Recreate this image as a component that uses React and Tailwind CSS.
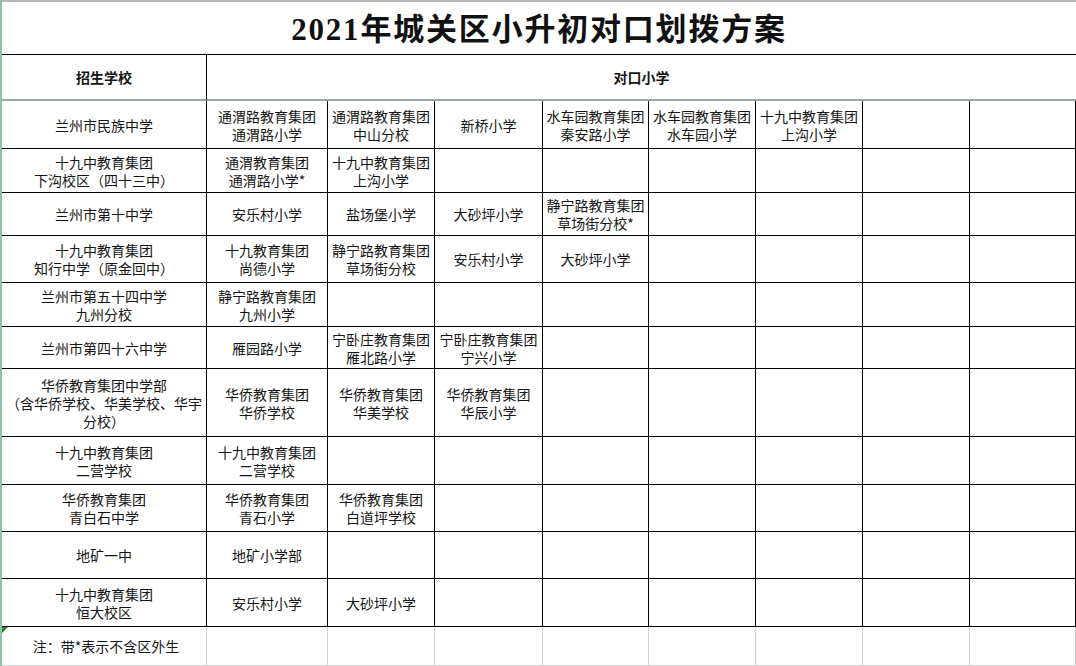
const rows = [
  ['兰州市民族中学', ['通渭路教育集团\n通渭路小学', '通渭路教育集团\n中山分校', '新桥小学', '水车园教育集团\n秦安路小学', '水车园教育集团\n水车园小学', '十九中教育集团\n上沟小学']],
  ['十九中教育集团\n下沟校区（四十三中）', ['通渭教育集团\n通渭路小学*', '十九中教育集团\n上沟小学']],
  ['兰州市第十中学', ['安乐村小学', '盐场堡小学', '大砂坪小学', '静宁路教育集团\n草场街分校*']],
  ['十九中教育集团\n知行中学（原金回中）', ['十九教育集团\n尚德小学', '静宁路教育集团\n草场街分校', '安乐村小学', '大砂坪小学']],
  ['兰州市第五十四中学\n九州分校', ['静宁路教育集团\n九州小学']],
  ['兰州市第四十六中学', ['雁园路小学', '宁卧庄教育集团\n雁北路小学', '宁卧庄教育集团\n宁兴小学']],
  ['华侨教育集团中学部\n（含华侨学校、华美学校、华宇\n分校）', ['华侨教育集团\n华侨学校', '华侨教育集团\n华美学校', '华侨教育集团\n华辰小学']],
  ['十九中教育集团\n二营学校', ['十九中教育集团\n二营学校']],
  ['华侨教育集团\n青白石中学', ['华侨教育集团\n青石小学', '华侨教育集团\n白道坪学校']],
  ['地矿一中', ['地矿小学部']],
  ['十九中教育集团\n恒大校区', ['安乐村小学', '大砂坪小学']],
];

function Cell({ text }) {
  return (
    <div className="flex items-center justify-center border-r border-b border-black text-center whitespace-pre-line leading-[18px] text-[14px] text-[#151515]">
      {text}
    </div>
  );
}

export default function App() {
  return (
    <div className="w-[1076px] h-[666px] overflow-hidden bg-white border-l-2 border-[#8cc4a4]" style={{ fontFamily: '"Noto Sans CJK SC", sans-serif' }}>
      <div className="grid grid-cols-[205px_121px_107px_108px_106px_107px_107px_107px_1fr] grid-rows-[55px_46px_48px_44px_43px_47px_44px_42px_68px_48px_47px_47px_48px_39px]">
        <div className="col-span-9 flex items-center justify-center pt-1 border-t-2 border-t-[#b8b8b8] border-b border-b-black">
          <span className="text-[31px] font-bold text-[#111] tracking-[1.8px]" style={{ fontFamily: '"Liberation Serif", "Noto Sans CJK SC", serif' }}>
            2021年城关区小升初对口划拨方案
          </span>
        </div>

        <div className="flex items-center justify-center border-r border-r-black border-b-2 border-b-[#98a8a0] text-[14px] font-bold text-[#151515]">
          招生学校
        </div>
        <div className="col-span-8 flex items-center justify-center border-b-2 border-b-[#98a8a0] text-[14px] font-bold text-[#151515]">
          对口小学
        </div>

        {rows.map(([school, list], i) => (
          <div key={i} className="contents">
            <Cell text={school} />
            {Array.from({ length: 8 }).map((_, j) => (
              <Cell key={j} text={list[j] || ''} />
            ))}
          </div>
        ))}

        <div className="relative flex items-center justify-center pl-1 border-r border-b border-[#d2d2d2] text-[14px] text-[#151515]">
          <span className="absolute left-0 top-0 w-0 h-0 border-t-[6px] border-r-[6px] border-t-[#2f7a3a] border-r-transparent" />
          注：带*表示不含区外生
        </div>
        {Array.from({ length: 8 }).map((_, j) => (
          <div key={j} className="border-r border-b border-[#d2d2d2]" />
        ))}
      </div>
    </div>
  );
}
